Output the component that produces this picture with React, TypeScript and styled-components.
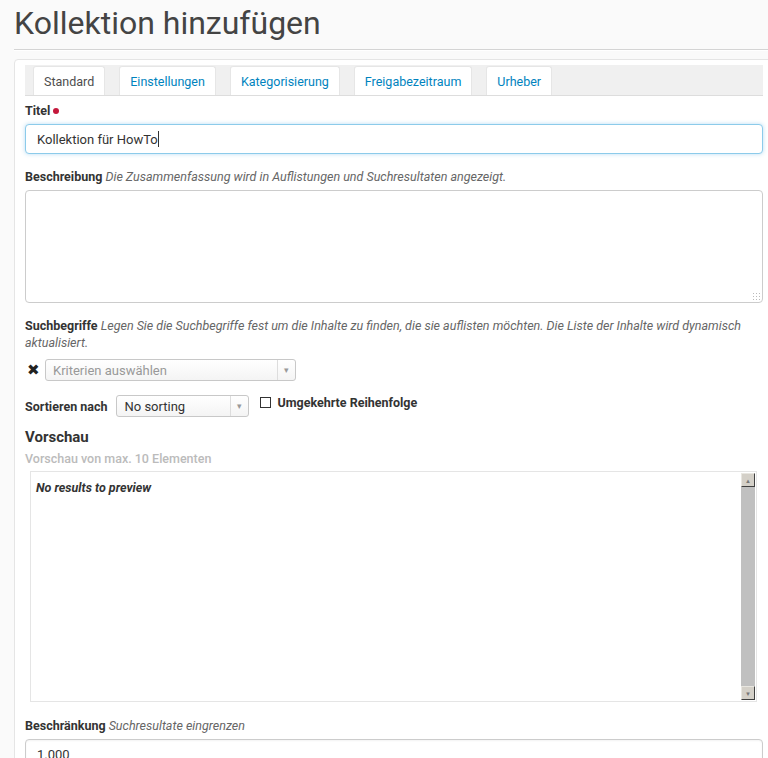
import styled, { createGlobalStyle } from 'styled-components';

const GlobalStyle = createGlobalStyle`
  body {
    margin: 0;
    background: #fafafa;
    font-family: Roboto, "Liberation Sans", sans-serif;
    color: #4d4d4d;
    overflow: hidden;
  }
`;

const tabs = ['Standard', 'Einstellungen', 'Kategorisierung', 'Freigabezeitraum', 'Urheber'];

const App: React.FC = () => {
  return (
    <Page>
      <GlobalStyle />
      <Heading>Kollektion hinzufügen</Heading>
      <Panel>
        <TabBar>
          {tabs.map((name, i) => (
            <Tab key={name} $active={i === 0}>
              {name}
            </Tab>
          ))}
        </TabBar>

        <Field>
          <Label>
            Titel <Required />
          </Label>
          <TextInput $focused>
            Kollektion für HowTo<Caret />
          </TextInput>
        </Field>

        <Field>
          <Label>
            Beschreibung <Hint>Die Zusammenfassung wird in Auflistungen und Suchresultaten angezeigt.</Hint>
          </Label>
          <TextArea>
            <Grip />
          </TextArea>
        </Field>

        <Field>
          <Label>
            Suchbegriffe{' '}
            <Hint>
              Legen Sie die Suchbegriffe fest um die Inhalte zu finden, die sie auflisten möchten. Die Liste der
              Inhalte wird dynamisch aktualisiert.
            </Hint>
          </Label>
          <CriteriaRow>
            <RemoveIcon>✖</RemoveIcon>
            <Select $width={251} $placeholder>
              <span>Kriterien auswählen</span>
              <Arrow>▾</Arrow>
            </Select>
          </CriteriaRow>
        </Field>

        <SortRow>
          <Label>Sortieren nach</Label>
          <Select $width={133}>
            <span>No sorting</span>
            <Arrow>▾</Arrow>
          </Select>
          <CheckLabel>
            <Checkbox />
            Umgekehrte Reihenfolge
          </CheckLabel>
        </SortRow>

        <PreviewTitle>Vorschau</PreviewTitle>
        <PreviewSub>Vorschau von max. 10 Elementen</PreviewSub>
        <PreviewBox>
          <PreviewContent>No results to preview</PreviewContent>
          <Scrollbar>
            <ScrollButton>▲</ScrollButton>
            <ScrollTrack />
            <ScrollButton>▼</ScrollButton>
          </Scrollbar>
        </PreviewBox>

        <Field>
          <Label>
            Beschränkung <Hint>Suchresultate eingrenzen</Hint>
          </Label>
          <TextInput>1.000</TextInput>
        </Field>
      </Panel>
    </Page>
  );
};
export default App;

const Page = styled.div`
  padding: 0 0 0 14px;
  height: 758px;
  overflow: hidden;
`;

const Heading = styled.h1`
  margin: 0;
  padding: 5px 0 8px;
  font-size: 32px;
  font-weight: 400;
  line-height: 36px;
  color: #444;
  border-bottom: 1px solid #d4d4d4;
  box-shadow: 0 1px 0 #fff;
`;

const Panel = styled.div`
  margin-top: 9px;
  margin-right: -10px;
  background: #fff;
  border: 1px solid #e5e5e5;
  border-radius: 4px;
  padding: 5px 14px 0 10px;
`;

const TabBar = styled.div`
  display: flex;
  gap: 14px;
  padding: 1px 8px 0;
  background: #f0f0f0;
  border-bottom: 1px solid #ddd;
  margin-bottom: 6px;
`;

const Tab = styled.div<{ $active?: boolean }>`
  height: 28px;
  padding: 0 10px;
  display: flex;
  align-items: center;
  background: #fff;
  border: 1px solid #e6e6e6;
  border-bottom: none;
  border-radius: 3px 3px 0 0;
  font-size: 12.5px;
  color: ${({ $active }) => ($active ? '#4d4d4d' : '#0083be')};
`;

const Field = styled.div`
  margin-bottom: 14px;
`;

const Label = styled.div`
  font-size: 12.5px;
  font-weight: 700;
  color: #333;
  line-height: 17px;
  margin-bottom: 5px;
`;

const Hint = styled.span`
  font-weight: 400;
  font-style: italic;
  color: #666;
`;

const Required = styled.span`
  display: inline-block;
  width: 6px;
  height: 6px;
  border-radius: 50%;
  background: #c4183c;
  vertical-align: 1px;
`;

const TextInput = styled.div<{ $focused?: boolean }>`
  height: 30px;
  box-sizing: border-box;
  padding: 0 11px;
  display: flex;
  align-items: center;
  border: 1px solid ${({ $focused }) => ($focused ? '#8ccbea' : '#ccc')};
  border-radius: 4px;
  box-shadow: ${({ $focused }) =>
    $focused ? '0 0 4px rgba(100, 180, 230, 0.45)' : 'inset 0 1px 2px rgba(0,0,0,0.05)'};
  font-size: 13px;
  font-weight: 400;
  color: #333;
  background: #fff;
`;

const Caret = styled.span`
  display: inline-block;
  width: 1px;
  height: 16px;
  background: #333;
`;

const TextArea = styled.div`
  height: 113px;
  box-sizing: border-box;
  border: 1px solid #ccc;
  border-radius: 4px;
  background: #fff;
  display: flex;
  align-items: flex-end;
  justify-content: flex-end;
  padding: 2px;
`;

const Grip = styled.span`
  width: 8px;
  height: 8px;
  background-image: radial-gradient(circle, #bbb 0.8px, transparent 1px);
  background-size: 3px 3px;
`;

const CriteriaRow = styled.div`
  display: flex;
  align-items: center;
  gap: 5px;
  margin-top: 8px;
  padding-left: 1px;
`;

const RemoveIcon = styled.span`
  font-size: 15px;
  color: #222;
  width: 14px;
  text-align: center;
`;

const Select = styled.div<{ $width: number; $placeholder?: boolean }>`
  width: ${({ $width }) => $width}px;
  height: 22px;
  box-sizing: border-box;
  display: flex;
  align-items: stretch;
  border: 1px solid #c8c8c8;
  border-radius: 3px;
  background: linear-gradient(#fff, #f4f4f4);
  font-size: 13px;
  font-weight: 400;
  color: ${({ $placeholder }) => ($placeholder ? '#999' : '#333')};

  span:first-child {
    flex: 1;
    display: flex;
    align-items: center;
    padding-left: 7px;
  }
`;

const Arrow = styled.span`
  width: 17px;
  border-left: 1px solid #ddd;
  display: flex;
  align-items: center;
  justify-content: center;
  font-size: 9px;
  color: #999;
`;

const SortRow = styled.div`
  display: flex;
  align-items: center;
  gap: 9px;
  margin-top: 1px;
  margin-bottom: 10px;

  ${Label} {
    margin: 0;
  }
`;

const CheckLabel = styled.label`
  display: flex;
  align-items: center;
  gap: 6px;
  align-self: flex-start;
  font-size: 12.5px;
  font-weight: 700;
  color: #333;
  margin-left: 2px;
`;

const Checkbox = styled.span`
  width: 9px;
  height: 9px;
  border: 1px solid #333;
  background: #fff;
`;

const PreviewTitle = styled.div`
  font-size: 15px;
  font-weight: 700;
  color: #333;
  line-height: 20px;
`;

const PreviewSub = styled.div`
  font-size: 12.5px;
  font-weight: 500;
  color: #bbb;
  line-height: 16px;
  margin: 4px 0 4px;
`;

const PreviewBox = styled.div`
  margin: 0 6px 15px 5px;
  height: 231px;
  box-sizing: border-box;
  border: 1px solid #e5e5e5;
  display: flex;
  padding: 1px 0;
`;

const PreviewContent = styled.div`
  flex: 1;
  padding: 7px 5px;
  font-size: 12.5px;
  font-weight: 700;
  font-style: italic;
  color: #333;
`;

const Scrollbar = styled.div`
  width: 14px;
  display: flex;
  flex-direction: column;
  margin-right: 1px;
`;

const ScrollButton = styled.div`
  height: 14px;
  box-sizing: border-box;
  background: #d4d0c8;
  border: 1px solid;
  border-color: #e8e6e0 #404040 #404040 #e8e6e0;
  font-size: 6px;
  color: #777;
  display: flex;
  align-items: center;
  justify-content: center;
`;

const ScrollTrack = styled.div`
  flex: 1;
  background: #c0c0c0;
`;
